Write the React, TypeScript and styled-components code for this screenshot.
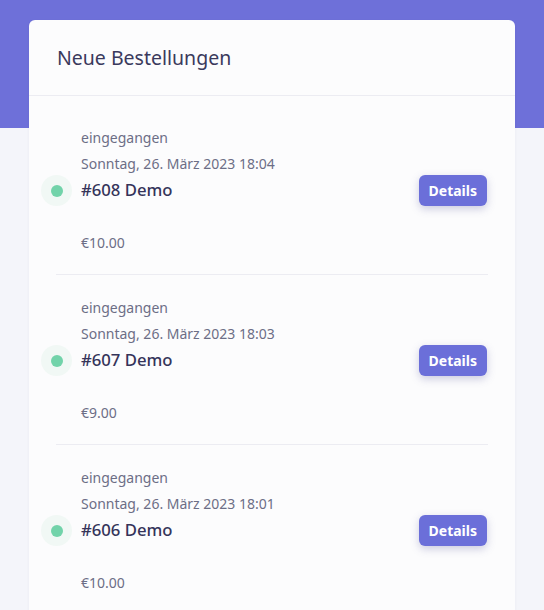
import React from 'react';
import styled, { createGlobalStyle } from 'styled-components';

const GlobalStyle = createGlobalStyle`
  html, body {
    margin: 0;
    padding: 0;
    background: #f4f5fa;
    font-family: 'Noto Sans', 'Open Sans', sans-serif;
    overflow: hidden;
  }
`;

const orders = [
  { id: 608, name: 'Demo', date: 'Sonntag, 26. März 2023 18:04', price: '€10.00' },
  { id: 607, name: 'Demo', date: 'Sonntag, 26. März 2023 18:03', price: '€9.00' },
  { id: 606, name: 'Demo', date: 'Sonntag, 26. März 2023 18:01', price: '€10.00' },
];

/**
 * page with purple top band.
 */
const Page = styled.div`
  min-height: 610px;
  background: linear-gradient(#6e70d9 0, #6e70d9 128px, #f4f5fa 128px);
  padding: 20px 29px 0 29px;
`;

const Card = styled.div`
  background: #fcfcfd;
  border-radius: 6px;
  box-shadow: 0 1px 3px rgba(60, 60, 110, 0.06);
  min-height: 700px;
`;

const CardHeader = styled.div`
  height: 75px;
  display: flex;
  align-items: center;
  padding-left: 28px;
  border-bottom: 1px solid #ececf2;
  font-size: 19.5px;
  color: #3a395c;
`;

const OrderList = styled.div`
  padding-top: 9px;
`;

const OrderRow = styled.div`
  display: flex;
  align-items: center;
  padding: 23px 28px 21px 12px;
`;

const Divider = styled.div`
  height: 1px;
  background: #ececf2;
  margin: 0 27px;
`;

const StatusDot = styled.div`
  width: 31px;
  height: 31px;
  border-radius: 50%;
  background: #f1f8f5;
  display: flex;
  align-items: center;
  justify-content: center;
  flex-shrink: 0;
  margin-right: 9px;

  &::after {
    content: '';
    width: 12px;
    height: 12px;
    border-radius: 50%;
    background: #72d3aa;
  }
`;

const OrderInfo = styled.div`
  flex: 1;
  display: flex;
  flex-direction: column;
`;

const Meta = styled.div<{ $gap?: number }>`
  font-size: 14px;
  line-height: 20px;
  color: #6c6e86;
  margin-top: ${(p) => p.$gap || 0}px;
`;

const OrderTitle = styled.div`
  font-size: 16.7px;
  line-height: 22px;
  font-weight: 500;
  color: #35345a;
  margin-top: 5px;
`;

const DetailsButton = styled.button`
  border: none;
  background: #6b6fd9;
  color: #fff;
  font-family: inherit;
  font-size: 14px;
  font-weight: 700;
  height: 31px;
  padding: 0 10px;
  border-radius: 6px;
  box-shadow: 0 3px 8px rgba(80, 80, 150, 0.28);
  cursor: pointer;
`;

export default function App() {
  return (
    <>
      <GlobalStyle />
      <Page>
        <Card>
          <CardHeader>Neue Bestellungen</CardHeader>
          <OrderList>
            {orders.map((o, i) => (
              <React.Fragment key={o.id}>
                {i > 0 && <Divider />}
                <OrderRow>
                  <StatusDot />
                  <OrderInfo>
                    <Meta>eingegangen</Meta>
                    <Meta $gap={6}>{o.date}</Meta>
                    <OrderTitle>
                      #{o.id} {o.name}
                    </OrderTitle>
                    <Meta $gap={32}>{o.price}</Meta>
                  </OrderInfo>
                  <DetailsButton>Details</DetailsButton>
                </OrderRow>
              </React.Fragment>
            ))}
          </OrderList>
        </Card>
      </Page>
    </>
  );
}
